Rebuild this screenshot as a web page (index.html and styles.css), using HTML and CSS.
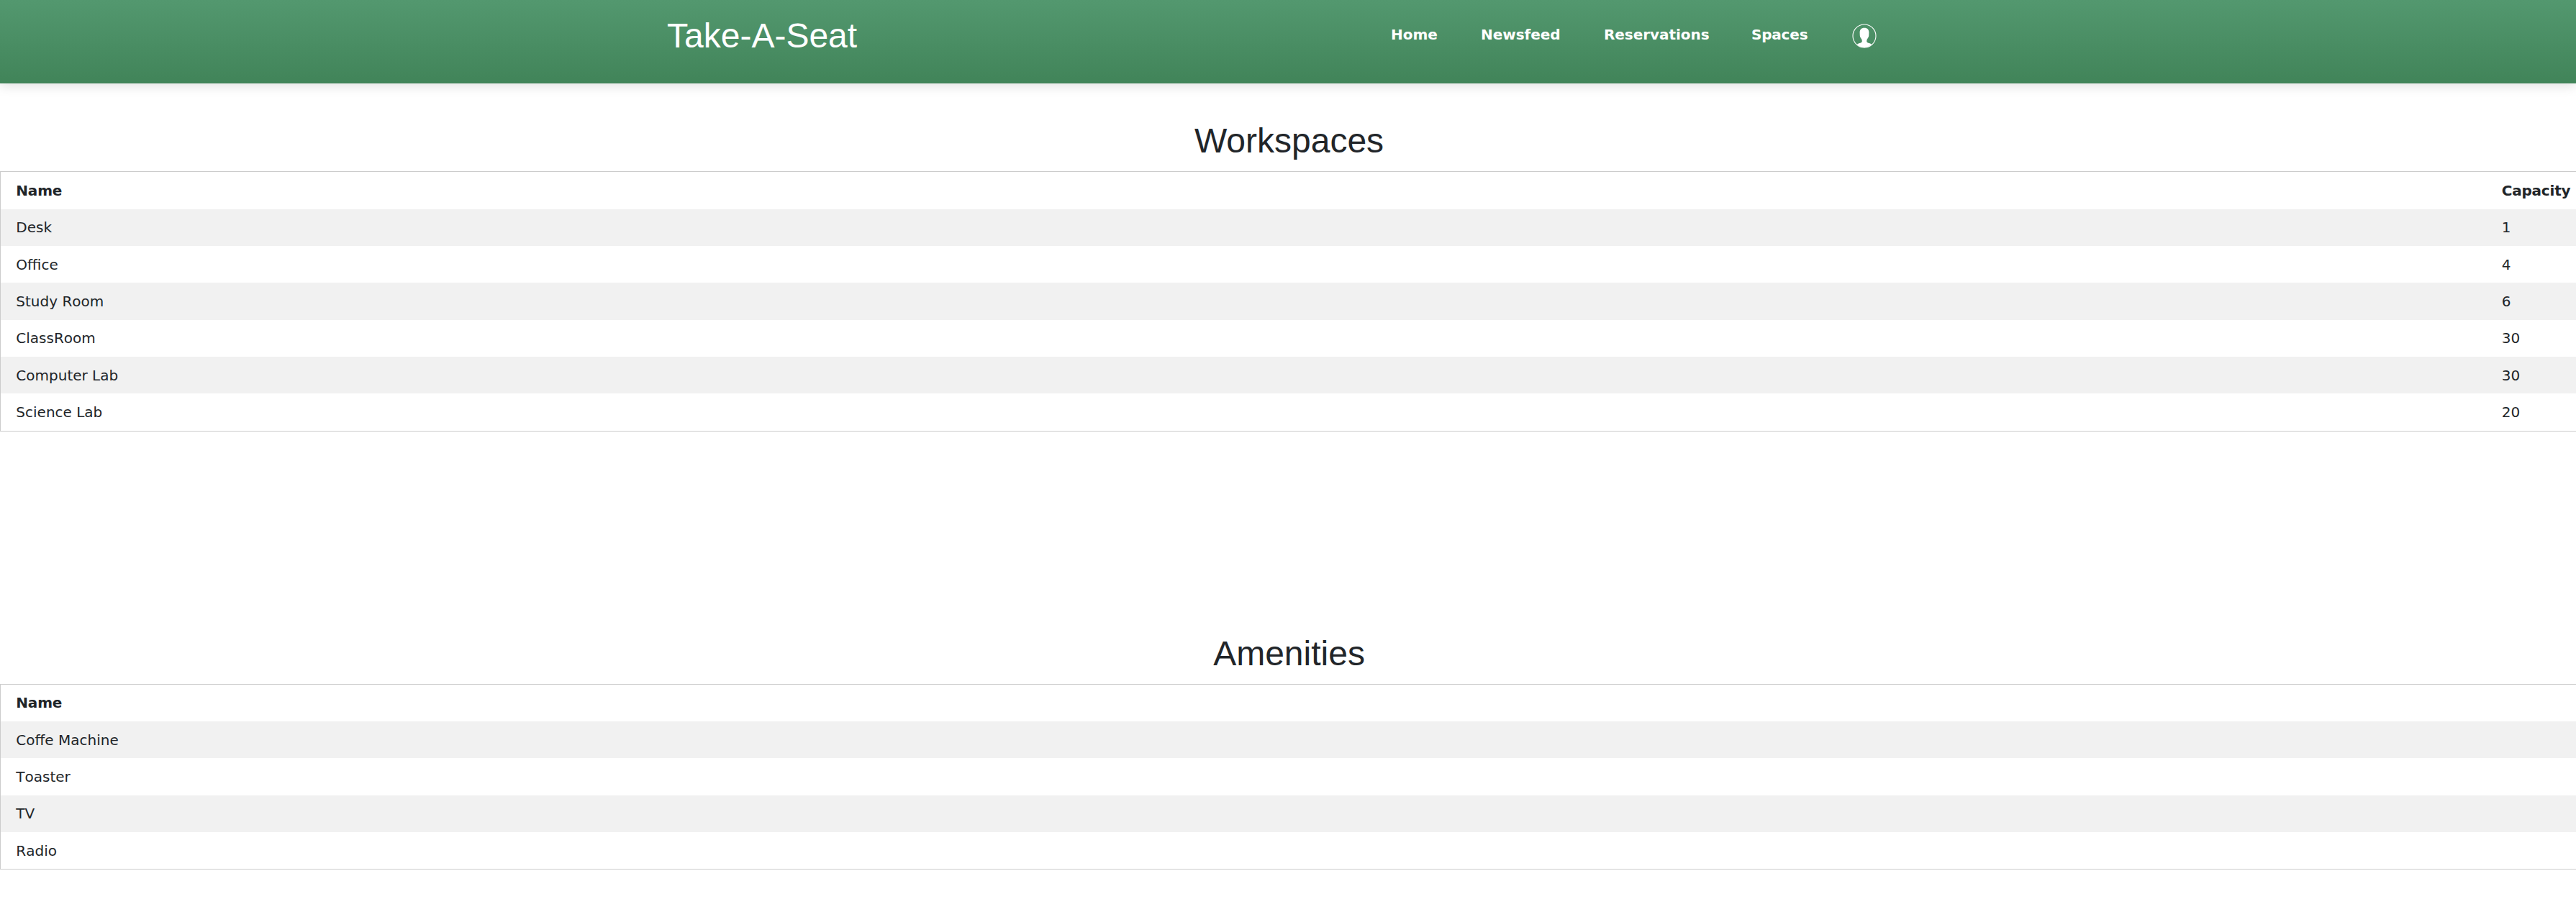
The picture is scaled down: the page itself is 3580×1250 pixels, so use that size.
FILE: index.html
```html
<!DOCTYPE html>
<html lang="en">
<head>
<meta charset="utf-8">
<title>Take-A-Seat</title>
<link rel="stylesheet" href="styles.css">
</head>
<body>
<header class="navbar">
  <h1 class="brand">Take-A-Seat</h1>
  <nav class="links">
    <a class="link home">Home</a>
    <a class="link newsfeed">Newsfeed</a>
    <a class="link reservations">Reservations</a>
    <a class="link spaces">Spaces</a>
    <svg class="avatar" viewBox="0 0 34 34" width="34" height="34">
      <circle cx="17" cy="17" r="16" fill="none" stroke="#fff" stroke-width="1.1"/>
      <path fill="#fff" d="M17 5.800c-4.200 0-6.500 2.700-6.400 6.500 0 1.500.2 2.200.1 3.200 0 2.600 1 4.200 2.300 5.700.6.9.8 2 .8 3.200-.1 1.500-2 2.100-3.600 2.700-1.300.5-2.500 1-3.400 1.700A16 16 0 0 0 17 33.200a16 16 0 0 0 10.200-4.400c-.9-.7-2.100-1.200-3.400-1.700-1.600-.6-3.500-1.200-3.600-2.700 0-1.200.2-2.300.8-3.200 1.300-1.500 2.300-3.100 2.300-5.700-.1-1 .1-1.700.1-3.200.1-3.800-2.200-6.500-6.400-6.500z"/>
    </svg>
  </nav>
</header>
<main>
  <section class="workspaces">
    <h2 class="title">Workspaces</h2>
    <table class="list">
      <colgroup><col><col class="capacity"></colgroup>
      <tr><th>Name</th><th>Capacity</th></tr>
      <tr><td>Desk</td><td>1</td></tr>
      <tr><td>Office</td><td>4</td></tr>
      <tr><td>Study Room</td><td>6</td></tr>
      <tr><td>ClassRoom</td><td>30</td></tr>
      <tr><td>Computer Lab</td><td>30</td></tr>
      <tr><td>Science Lab</td><td>20</td></tr>
    </table>
  </section>
  <section class="amenities">
    <h2 class="title">Amenities</h2>
    <table class="list">
      <tr><th>Name</th></tr>
      <tr><td>Coffe Machine</td></tr>
      <tr><td>Toaster</td></tr>
      <tr><td>TV</td></tr>
      <tr><td>Radio</td></tr>
    </table>
  </section>
</main>
</body>
</html>
```
FILE: styles.css
```css
* { box-sizing: border-box; }
body {
  margin: 0;
  overflow: hidden;
  background: #fff;
  color: #212529;
  font: 20px/30px Verdana, "DejaVu Sans", sans-serif;
  font-kerning: none;
}
.navbar {
  display: flex;
  height: 116px;
  padding-left: 927px;
  background: linear-gradient(#53986f, #418459);
  box-shadow: 0 3px 16px rgba(0, 0, 0, .13);
  color: #fff;
}
.brand, .title {
  margin: 0;
  font: 400 48px/58px "Liberation Sans", Arial, sans-serif;
  font-kerning: normal;
}
.brand { width: 1006px; padding-top: 21px; }
.links { display: flex; padding-top: 33px; }
.link { font-weight: 700; white-space: nowrap; letter-spacing: -.05px; }
.home { width: 125px; }
.newsfeed { width: 171px; }
.reservations { width: 205px; }
.spaces { width: 140px; letter-spacing: -.2px; }
.avatar { flex: none; }
.title { width: 3583px; height: 58px; text-align: center; }
.workspaces { height: 711.7px; padding-top: 51px; }
.amenities { padding-top: 52px; }
.list {
  width: 3595px;
  margin-top: 13.3px;
  border: 1px solid #ccc;
  border-collapse: separate;
  border-spacing: 0;
  table-layout: fixed;
}
.amenities .list { margin-top: 13px; }
.capacity { width: 128px; }
.list tr:nth-child(even) { background: #f1f1f1; }
.list th, .list td {
  height: 51.33px;
  padding: 0 10.67px;
  text-align: left;
  letter-spacing: 0;
}
.list th:first-child, .list td:first-child { padding-left: 21.33px; }
.list th { letter-spacing: -.2px; }
```
